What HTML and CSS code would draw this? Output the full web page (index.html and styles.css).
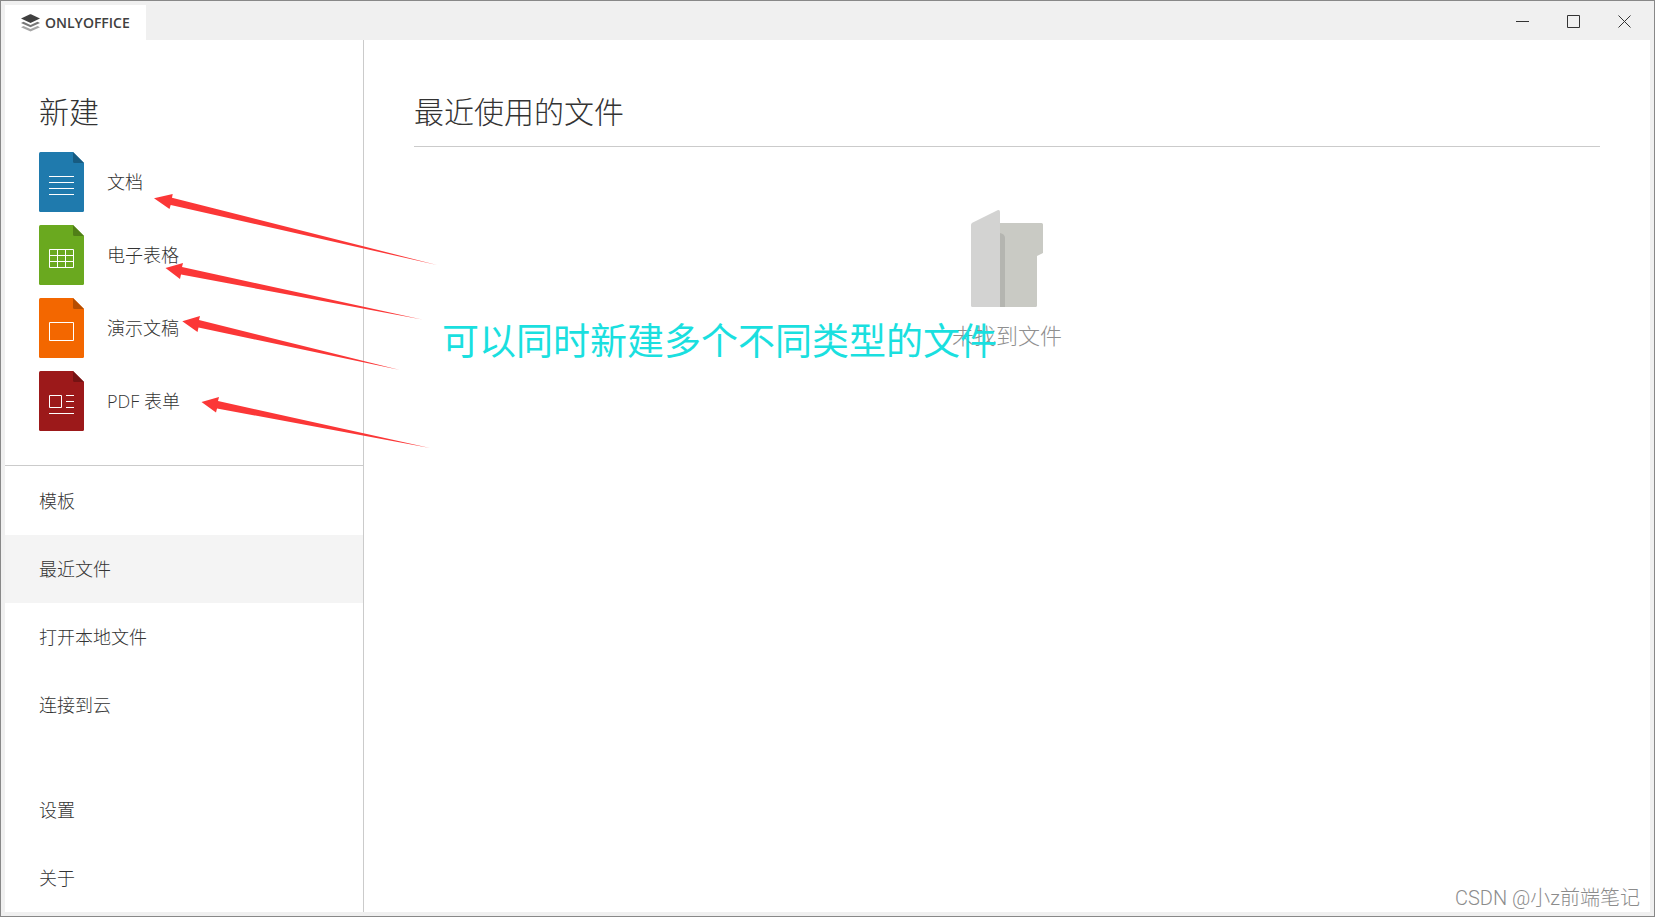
FILE: index.html
```html
<!DOCTYPE html>
<html lang="zh-CN">
<head>
<meta charset="utf-8">
<title>ONLYOFFICE</title>
<link rel="stylesheet" href="styles.css">
</head>
<body>
<div class="window">
  <header class="titlebar">
    <button class="tab" type="button">
      <svg class="logo" width="19" height="18" viewBox="0 0 19 18" aria-hidden="true">
        <path fill="#a5a5a5" d="M0 13.2 2.5 12 9.5 15.1 16.5 12 19 13.2 10 17.3Q9.500 17.500 9 17.300Z"/>
        <path fill="#777" d="M0 9 2.500 7.800 9.500 10.900 16.500 7.800 19 9 10 13.100Q9.500 13.300 9 13.100Z"/>
        <path fill="#404040" d="M0 4.500 9 .3Q9.500 .1 10 .3L19 4.500 10 8.800Q9.500 9 9 8.800Z"/>
      </svg>
      <span>ONLYOFFICE</span>
    </button>
    <div class="controls">
      <button class="control" type="button" aria-label="最小化"><svg width="13" height="13" viewBox="0 0 13 13"><path d="M0 6.500h13"/></svg></button>
      <button class="control" type="button" aria-label="最大化"><svg width="13" height="13" viewBox="0 0 13 13"><path d="M.5 .5h12v12H.5z"/></svg></button>
      <button class="control" type="button" aria-label="关闭"><svg width="13" height="13" viewBox="0 0 13 13"><path d="M.5 .5l12 12M12.500 .5l-12 12"/></svg></button>
    </div>
  </header>
  <div class="body">
    <aside class="sidebar">
      <section class="create">
        <h2 class="heading">新建</h2>
        <div class="create-list">
          <button class="create-item" type="button">
            <svg width="45" height="60" viewBox="0 0 45 60" aria-hidden="true">
              <path fill="#1f7aad" d="M1.500 0H34L45 11V58.500Q45 60 43.500 60H1.500Q0 60 0 58.500V1.500Q0 0 1.500 0Z"/>
              <path fill="#175b81" d="M34 0 45 11H35.500Q34 11 34 9.500Z"/>
              <path class="glyph" d="M10 24.500h25M10 30.500h25M10 36.500h25M10 42.500h25"/>
            </svg>
            <span>文档</span>
          </button>
          <button class="create-item" type="button">
            <svg width="45" height="60" viewBox="0 0 45 60" aria-hidden="true">
              <path fill="#6aa91f" d="M1.500 0H34L45 11V58.500Q45 60 43.500 60H1.500Q0 60 0 58.500V1.500Q0 0 1.500 0Z"/>
              <path fill="#507f17" d="M34 0 45 11H35.500Q34 11 34 9.500Z"/>
              <path class="glyph" d="M10.500 24.500h24v18h-24zM10.500 30.500h24M10.500 36.500h24M18.500 24.500v18M26.500 24.500v18"/>
            </svg>
            <span>电子表格</span>
          </button>
          <button class="create-item" type="button">
            <svg width="45" height="60" viewBox="0 0 45 60" aria-hidden="true">
              <path fill="#f36700" d="M1.500 0H34L45 11V58.500Q45 60 43.500 60H1.500Q0 60 0 58.500V1.500Q0 0 1.500 0Z"/>
              <path fill="#b64d00" d="M34 0 45 11H35.500Q34 11 34 9.500Z"/>
              <path class="glyph" d="M10.500 24.500h24v18h-24z"/>
            </svg>
            <span>演示文稿</span>
          </button>
          <button class="create-item" type="button">
            <svg width="45" height="60" viewBox="0 0 45 60" aria-hidden="true">
              <path fill="#9c191a" d="M1.500 0H34L45 11V58.500Q45 60 43.500 60H1.500Q0 60 0 58.500V1.500Q0 0 1.500 0Z"/>
              <path fill="#751313" d="M34 0 45 11H35.500Q34 11 34 9.500Z"/>
              <path class="glyph" d="M10.500 24.500h12v12h-12zM27 24.500h8M27 30.500h8M27 36.500h8M10 42.500h25"/>
            </svg>
            <span>PDF 表单</span>
          </button>
        </div>
      </section>
      <nav class="nav">
        <button class="nav-item" type="button">模板</button>
        <button class="nav-item nav-item-active" type="button" aria-current="page">最近文件</button>
        <button class="nav-item" type="button">打开本地文件</button>
        <button class="nav-item" type="button">连接到云</button>
        <button class="nav-item nav-item-end" type="button">设置</button>
        <button class="nav-item" type="button">关于</button>
      </nav>
    </aside>
    <main class="main">
      <h1 class="heading main-heading">最近使用的文件</h1>
      <div class="empty">
        <svg width="72" height="97" viewBox="0 0 72 97" aria-hidden="true">
          <path fill="#c9cac4" d="M28 13H70.500Q72 13 72 14.500V43L66 46V95.500Q66 97 64.500 97H28Z"/>
          <path fill="#b4b5b0" d="M29 23Q34 24 34 28V97H29Z"/>
          <path fill="#d3d3d2" d="M0 15Q0 13.500 1.300 12.800L26.500 .3Q29 -.5 29 2V97H1.500Q0 97 0 95.500Z"/>
        </svg>
        <p class="empty-text">未找到文件</p>
      </div>
    </main>
  </div>
  <svg class="arrows" width="440" height="460" viewBox="0 0 440 460" aria-hidden="true">
    <path d="M154 198.300 172.700 194 172 197.700 437 265 170.700 205 169.500 209Z"/>
    <path d="M165.500 268 183 263 182 267 422 319.500 181 274.500 180 279Z"/>
    <path d="M182.300 321.300 200 316 199 320 400 370 198.500 327.500 197.500 332Z"/>
    <path d="M201.500 402 219 397 218 401 430 448 217 408.500 216 412.500Z"/>
  </svg>
  <p class="note">可以同时新建多个不同类型的文件</p>
  <p class="watermark">CSDN @小z前端笔记</p>
</div>
</body>
</html>
```

FILE: styles.css
```css
* {
  box-sizing: border-box;
}

body {
  margin: 0;
  color: #333;
  font-family: "Open Sans", "Noto Sans CJK SC", sans-serif;
  font-size: 18px;
  font-weight: 300;
  line-height: 24px;
}

button {
  margin: 0;
  padding: 0;
  border: 0;
  background: none;
  color: inherit;
  font: inherit;
  text-align: left;
}

h1,
h2,
p {
  margin: 0;
}

svg {
  display: block;
  flex: none;
}

.window {
  position: relative;
  display: flex;
  flex-direction: column;
  min-height: 100vh;
  padding: 4px;
  border: 1px solid #888;
  background: #f0f0f0;
}

.titlebar {
  display: flex;
  justify-content: space-between;
  height: 35px;
}

.tab {
  display: flex;
  align-items: center;
  gap: 5px;
  padding: 0 16px;
  background: #fff;
  color: #404040;
  font-size: 14px;
  font-weight: 600;
}

.controls {
  display: flex;
}

.control {
  display: flex;
  align-items: center;
  justify-content: center;
  width: 51px;
  height: 33px;
}

.control svg {
  margin-bottom: 1px;
}

.control path {
  fill: none;
  stroke: #333;
}

.body {
  display: flex;
  flex: 1;
  background: #fff;
}

.sidebar {
  display: flex;
  flex-direction: column;
  width: 359px;
  border-right: 1px solid #cbcbcb;
}

.create {
  padding: 50px 34px 34px;
  border-bottom: 1px solid #cbcbcb;
}

.heading {
  font-size: 30px;
  font-weight: 300;
  line-height: 44px;
}

.create-list {
  display: flex;
  flex-direction: column;
  gap: 13px;
  margin-top: 18px;
}

.create-item {
  display: flex;
  align-items: center;
  gap: 23px;
}

.glyph {
  fill: none;
  stroke: #fff;
}

.nav {
  display: flex;
  flex: 1;
  flex-direction: column;
  padding-top: 1px;
}

.nav-item {
  height: 68px;
  padding: 0 34px;
}

.nav-item-active {
  background: #f4f4f4;
}

.nav-item-end {
  margin-top: auto;
}

.main {
  flex: 1;
  padding: 50px 50px 0;
}

.main-heading {
  padding-bottom: 12px;
  border-bottom: 1px solid #cbcbcb;
}

.empty {
  display: flex;
  flex-direction: column;
  align-items: center;
  gap: 12px;
  padding-top: 63px;
}

.empty-text {
  color: #8f8f8f;
  font-size: 22px;
  line-height: 32px;
}

.arrows {
  position: absolute;
  top: -1px;
  left: -1px;
  fill: #fb3737;
  pointer-events: none;
}

.note {
  position: absolute;
  top: 313px;
  left: 441px;
  color: #1adfdf;
  font-size: 37px;
  font-weight: 400;
  line-height: 54px;
}

.watermark {
  position: absolute;
  right: 14px;
  bottom: 4px;
  color: #8c8c8c;
  font-family: Roboto, "Noto Sans CJK SC", sans-serif;
  font-size: 20px;
  line-height: 28px;
}
```
